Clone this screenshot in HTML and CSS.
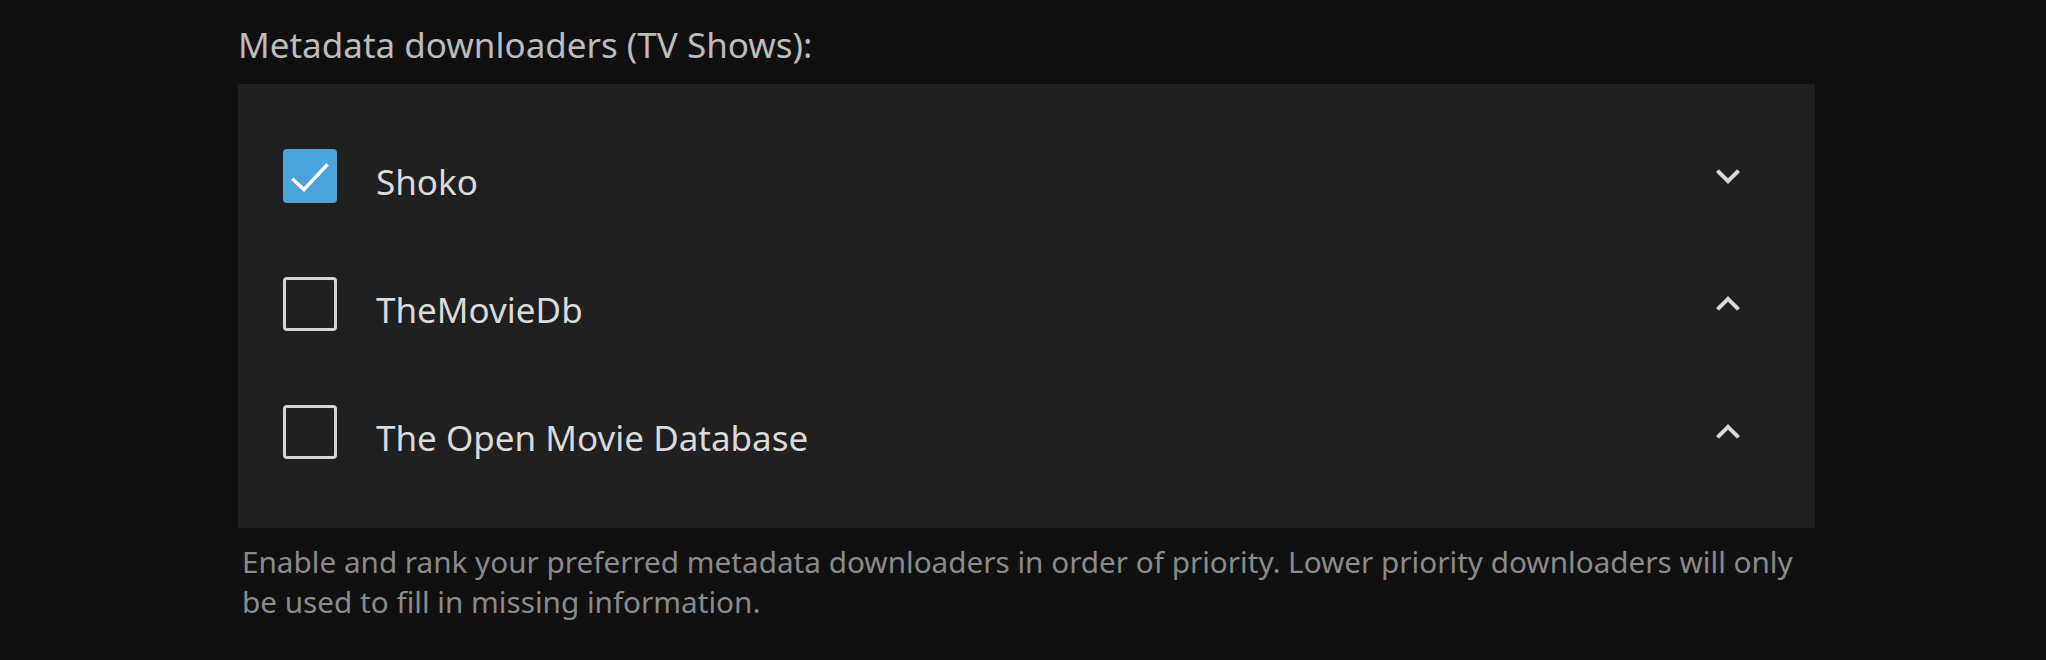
FILE: index.html
```html
<!DOCTYPE html>
<html lang="en">
<head>
<meta charset="utf-8">
<title>Metadata downloaders</title>
<link rel="stylesheet" href="styles.css">
</head>
<body>
<div class="page">
  <section class="field">
    <h3 class="field-title">Metadata downloaders (TV Shows):</h3>
    <div class="card">
      <div class="row">
        <span class="checkbox checked">
          <svg width="54" height="54" viewBox="0 0 54 54"><polyline points="10.5,31 21,40.5 43.5,16.5" fill="none" stroke="#ffffff" stroke-width="3.4" stroke-linecap="square"/></svg>
        </span>
        <span class="label">Shoko</span>
        <svg class="chev" width="48" height="48" viewBox="0 0 24 24"><path d="M7.41 8.59L12 13.170l4.59-4.58L18 10l-6 6-6-6 1.41-1.41z"/></svg>
      </div>
      <div class="row">
        <span class="checkbox"></span>
        <span class="label">TheMovieDb</span>
        <svg class="chev" width="48" height="48" viewBox="0 0 24 24"><path d="M7.41 15.41L12 10.83l4.59 4.58L18 14l-6-6-6 6z"/></svg>
      </div>
      <div class="row">
        <span class="checkbox"></span>
        <span class="label">The Open Movie Database</span>
        <svg class="chev" width="48" height="48" viewBox="0 0 24 24"><path d="M7.41 15.41L12 10.83l4.59 4.58L18 14l-6-6-6 6z"/></svg>
      </div>
    </div>
    <p class="description">Enable and rank your preferred metadata downloaders in order of priority. Lower priority downloaders will only be used to fill in missing information.</p>
  </section>
</div>
</body>
</html>
```
FILE: styles.css
```css
html, body {
  margin: 0;
  padding: 0;
  background: #101010;
}

body {
  font-family: "Noto Sans", "Open Sans", sans-serif;
  height: 660px;
  overflow: hidden;
}

.page {
  padding: 21px 0 0 238px;
}

.field {
  width: 1577px;
}

.field-title {
  margin: 0 0 15px 0;
  font-size: 35px;
  line-height: 48px;
  font-weight: 400;
  color: #bcbcbc;
}

.card {
  background: #202020;
  padding: 28px 0 32px 0;
}

.row {
  height: 128px;
  display: flex;
  align-items: center;
}

.checkbox {
  box-sizing: border-box;
  width: 54px;
  height: 54px;
  margin-left: 45px;
  border: 3px solid #d4d4d4;
  border-radius: 4px;
  flex: none;
  display: block;
}

.checkbox.checked {
  border: none;
  background: #4ba3d9;
}

.checkbox svg {
  display: block;
}

.label {
  flex: 1;
  margin-left: 39px;
  padding-top: 11px;
  font-size: 35px;
  line-height: 48px;
  color: #dadada;
}

.chev {
  flex: none;
  margin-right: 63px;
  fill: #d6d6d6;
  display: block;
}

.description {
  margin: 14px 0 0 0;
  padding-left: 4px;
  font-size: 29.7px;
  line-height: 40px;
  color: #8a8a8a;
}
```
